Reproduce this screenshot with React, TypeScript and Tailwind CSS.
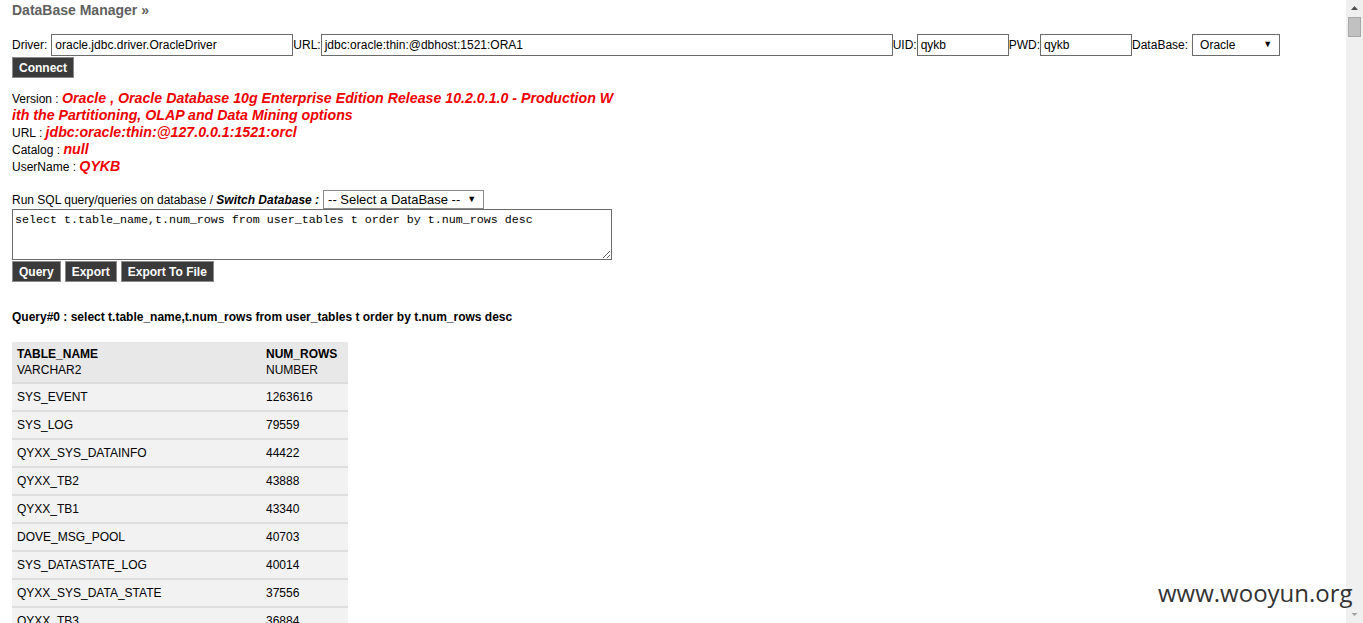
import React from "react";

const rows: [string, string][] = [
  ["SYS_EVENT", "1263616"],
  ["SYS_LOG", "79559"],
  ["QYXX_SYS_DATAINFO", "44422"],
  ["QYXX_TB2", "43888"],
  ["QYXX_TB1", "43340"],
  ["DOVE_MSG_POOL", "40703"],
  ["SYS_DATASTATE_LOG", "40014"],
  ["QYXX_SYS_DATA_STATE", "37556"],
  ["QYXX_TB3", "36884"],
];

function Btn({ children }: { children: React.ReactNode }) {
  return (
    <span className="inline-flex h-[21px] items-center border border-[#8a8a8a] bg-[#3b3b3b] px-[6px] text-[12px] font-bold leading-none text-white">
      {children}
    </span>
  );
}

function Field({ w, value }: { w: string; value: string }) {
  return (
    <span
      className={`inline-flex h-[22px] items-center border border-[#6b6b6b] bg-white pl-[3px] text-[12px] text-black ${w}`}
    >
      {value}
    </span>
  );
}

const red = "text-[14.2px] font-bold italic leading-[14px] text-[#ee0000]";

export default function App() {
  return (
    <div
      className="relative h-[623px] w-[1363px] overflow-hidden bg-white text-[12px] text-black"
      style={{ fontFamily: '"Liberation Sans", Arial, sans-serif' }}
    >
      <div className="pl-3 pr-[17px]">
        <div className="pt-[2px] text-[14px] font-bold leading-[17px] text-[#606060]">
          DataBase Manager »
        </div>

        <div className="mt-[15px] flex h-[22px] items-center">
          <span className="mr-[4px]">Driver:</span>
          <Field w="w-[242px]" value="oracle.jdbc.driver.OracleDriver" />
          <span>URL:</span>
          <Field w="w-[572px]" value="jdbc:oracle:thin:@dbhost:1521:ORA1" />
          <span>UID:</span>
          <Field w="w-[92px]" value="qykb" />
          <span>PWD:</span>
          <Field w="w-[92px]" value="qykb" />
          <span className="mr-[4px]">DataBase:</span>
          <span className="inline-flex h-[22px] w-[88px] items-center justify-between border border-[#6b6b6b] bg-white pl-[7px] pr-[7px]">
            <span>Oracle</span>
            <span className="text-[9px]">▼</span>
          </span>
        </div>
        <div className="mt-[1px] flex">
          <Btn>Connect</Btn>
        </div>

        <div className="mt-[13px] w-[604px] break-all leading-[17px]">
          <span>Version : </span>
          <span className={red}>
            Oracle , Oracle Database 10g Enterprise Edition Release 10.2.0.1.0 - Production With the Partitioning, OLAP and Data Mining options
          </span>
        </div>
        <div className="leading-[17px]">
          URL : <span className={red}>jdbc:oracle:thin:@127.0.0.1:1521:orcl</span>
        </div>
        <div className="leading-[17px]">
          Catalog : <span className={red}>null</span>
        </div>
        <div className="leading-[17px]">
          UserName : <span className={red}>QYKB</span>
        </div>

        <div className="mt-[14px] flex h-[19px] items-center">
          <span>
            Run SQL query/queries on database / <b><i>Switch Database :</i></b>
          </span>
          <span className="ml-[4px] inline-flex h-[19px] w-[161px] items-center justify-between border border-[#8a8a8a] bg-white pl-[4px] pr-[7px] text-[13px]">
            <span>-- Select a DataBase --</span>
            <span className="text-[9px]">▼</span>
          </span>
        </div>
        <textarea
          readOnly
          defaultValue="select t.table_name,t.num_rows from user_tables t order by t.num_rows desc"
          className="block h-[51px] w-[600px] resize border border-[#6b6b6b] px-[2px] pt-[3px] text-[11.67px] leading-[14px] text-black outline-none"
          style={{ fontFamily: '"Liberation Mono", "Courier New", monospace' }}
        />
        <div className="mt-[1px] flex gap-[4px]">
          <Btn>Query</Btn>
          <Btn>Export</Btn>
          <Btn>Export To File</Btn>
        </div>

        <div className="mt-[27px] font-bold leading-[16px]">
          Query#0 : select t.table_name,t.num_rows from user_tables t order by t.num_rows desc
        </div>

        <div className="mt-[17px] w-[336px]">
          <div className="flex h-[42px] flex-col justify-center border-b-2 border-[#dcdcdc] bg-[#e8e8e8] px-[5px] leading-[16px]">
            <div className="flex">
              <span className="w-[249px] font-bold">TABLE_NAME</span>
              <span className="font-bold">NUM_ROWS</span>
            </div>
            <div className="flex">
              <span className="w-[249px]">VARCHAR2</span>
              <span>NUMBER</span>
            </div>
          </div>
          {rows.map(([n, c]) => (
            <div
              key={n}
              className="flex h-[28px] items-center border-b-2 border-[#dedede] bg-[#f2f2f2] px-[5px]"
            >
              <span className="w-[249px]">{n}</span>
              <span>{c}</span>
            </div>
          ))}
        </div>
      </div>

      {/* scrollbar */}
      <div className="absolute right-0 top-0 flex h-[623px] w-[17px] flex-col items-center bg-[#f0f0f0]">
        <svg width="17" height="17" viewBox="0 0 17 17" className="shrink-0">
          <path d="M5 10 L8.5 6 L12 10 Z" fill="#505050" />
        </svg>
        <div className="h-[20px] w-[13px] border border-[#a8a8a8] bg-[#c1c1c1]" />
        <div className="flex-1" />
        <svg width="17" height="17" viewBox="0 0 17 17" className="shrink-0">
          <path d="M5.5 7 L11.5 7 L8.5 10 Z" fill="#a0a0a0" />
        </svg>
      </div>

      {/* watermark */}
      <div
        className="absolute left-[1158px] top-[578px] text-[24px] leading-[30px] text-[#333]"
        style={{ fontFamily: '"Open Sans", sans-serif' }}
      >
        www.wooyun.org
      </div>
    </div>
  );
}
